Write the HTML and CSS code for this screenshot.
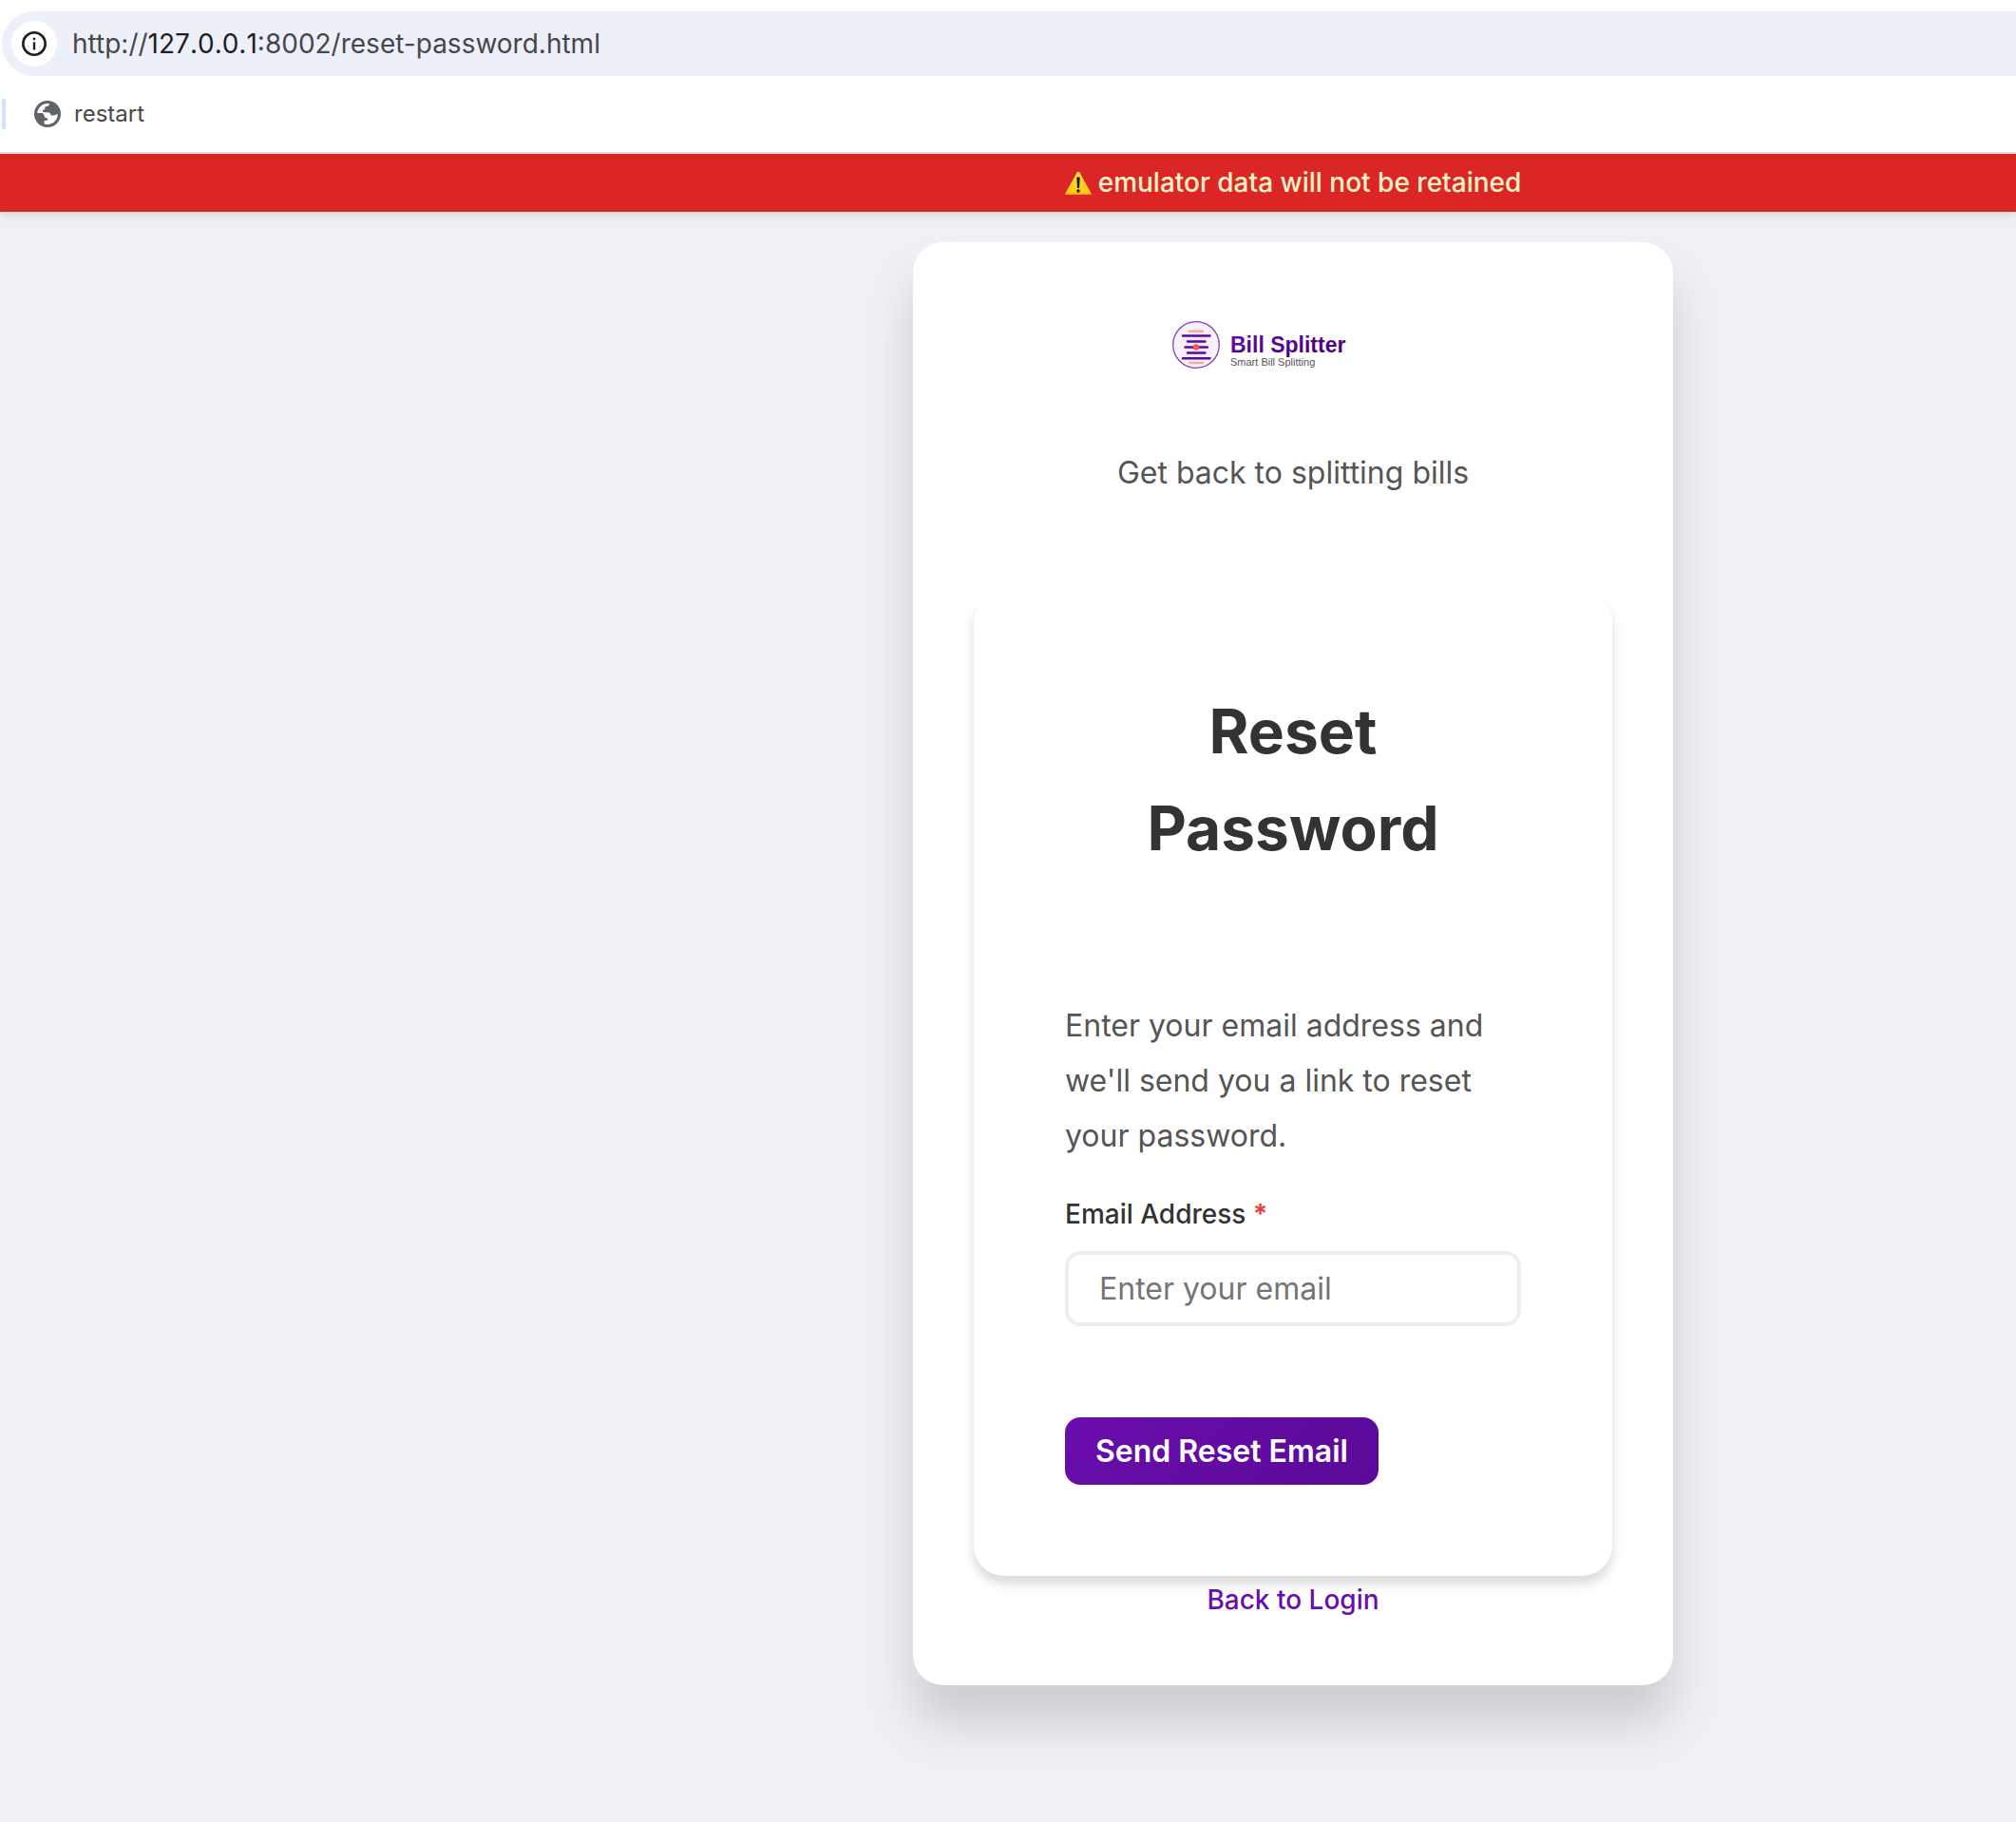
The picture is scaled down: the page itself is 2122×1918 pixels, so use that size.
FILE: index.html
```html
<!DOCTYPE html>
<html lang="en">
<head>
<meta charset="utf-8">
<title>Reset Password - Bill Splitter</title>
<link rel="stylesheet" href="styles.css">
</head>
<body>
<header class="browser">
  <div class="address-bar">
    <button class="site-info" type="button" aria-label="View site information">
      <svg width="28" height="28" viewBox="0 0 28 28" fill="none" aria-hidden="true">
        <circle cx="14" cy="14" r="11.7" stroke="#1f1f1f" stroke-width="2.6"/>
        <rect x="12.8" y="12.4" width="2.4" height="8" fill="#1f1f1f"/>
        <rect x="12.8" y="7.8" width="2.4" height="2.4" fill="#1f1f1f"/>
      </svg>
    </button>
    <div class="url">http://<span class="url-host">127.0.0.1</span>:8002/reset-password.html</div>
  </div>
  <nav class="bookmarks">
    <span class="bookmark-divider"></span>
    <a class="bookmark" href="#">
      <svg width="28" height="28" viewBox="0 0 28 28" aria-hidden="true">
        <circle cx="14" cy="14" r="14" fill="#5f6368"/>
        <path d="M3.200 13C3.700 7.700 8.200 3.200 14 3.100L16 3.300C15.800 5 14.800 6 13 6C11.600 6 11.200 6.800 11.200 8C11.200 9.400 10.400 9.800 9 10C8.800 11.200 9.200 12.200 10.200 12.200H14.500C16.600 12.200 17.400 13.600 17.400 15.400H20C22 15.400 22.600 13.800 24.800 14.200C24.800 20.200 20 24.900 14 24.900C12.800 24.900 11.700 24.800 10.600 24.400V21H12.500C14 21 14.400 19.800 14 18.300C11.600 18.300 10.600 17 10.200 14.400L8.600 13.100Z" fill="#fff"/>
      </svg>
      <span>restart</span>
    </a>
  </nav>
</header>

<div class="banner" role="alert">
  <svg width="28" height="26" viewBox="0 0 28 26" aria-hidden="true">
    <defs>
      <linearGradient id="warn" x1="0" y1="0" x2="0" y2="1">
        <stop offset="0" stop-color="#ffe04a"/><stop offset="1" stop-color="#fdc60a"/>
      </linearGradient>
    </defs>
    <path d="M12.800 1.300Q14 0 15.200 1.300L27.600 23.500Q28 25 26.600 25H1.400Q0 25 .4 23.500Z" fill="url(#warn)"/>
    <path d="M.4 23.500Q0 25 1.400 25H26.600Q28 25 27.600 23.500Z" fill="#eda51c"/>
    <path d="M12.300 6.500H15.700L15 18H13Z" fill="#1c1a0b"/>
    <circle cx="14" cy="21" r="1.700" fill="#1c1a0b"/>
  </svg>
  <span>emulator data will not be retained</span>
</div>

<main class="page">
  <section class="card">
    <svg class="logo" width="272" height="88" viewBox="0 0 272 88" role="img" aria-label="Bill Splitter">
      <defs>
        <linearGradient id="brand" x1="0" y1="0" x2="1" y2="1">
          <stop offset="0" stop-color="#6a0dad"/><stop offset="1" stop-color="#3d0066"/>
        </linearGradient>
        <radialGradient id="disc">
          <stop offset="0" stop-color="#efe6f8"/><stop offset="1" stop-color="#f8f4fd"/>
        </radialGradient>
      </defs>
      <circle cx="34" cy="44" r="24.300" fill="url(#disc)" stroke="#8540bd" stroke-width="1.300"/>
      <g stroke-linecap="round" stroke-width="2.400" fill="none">
        <path d="M27 29.700H41M27 63H41" stroke="#f9a8a4"/>
        <path d="M20 34.500H48.500M25 40.500H43.500M22.500 46.500H46M25 52.500H43.500M20 58.300H48.500" stroke="#5a0a98"/>
      </g>
      <circle cx="34" cy="46.500" r="3.200" fill="#f45b55"/>
      <text class="logo-name" x="70" y="52" fill="url(#brand)">Bill Splitter</text>
      <text class="logo-tag" x="70" y="66">Smart Bill Splitting</text>
    </svg>
    <p class="tagline">Get back to splitting bills</p>

    <form class="panel">
      <h1 class="title">Reset Password</h1>
      <p class="intro">Enter your email address and we'll send you a link to reset your password.</p>
      <label class="label" for="email">Email Address <span class="required">*</span></label>
      <input class="input" id="email" type="email" placeholder="Enter your email">
      <button class="submit" type="button">Send Reset Email</button>
    </form>
    <a class="back" href="#">Back to Login</a>
  </section>
</main>
</body>
</html>
```
FILE: styles.css
```css
* {
  box-sizing: border-box;
}

body {
  margin: 0;
  min-height: 100vh;
  background: #f0f1f5;
  color: #333;
  font-family: Inter, "Liberation Sans", sans-serif;
  font-size: 32px;
}

h1,
p {
  margin: 0;
}

a {
  text-decoration: none;
}

/* Browser toolbar */
.browser {
  padding: 12px 0 24px 2px;
  background: #fff;
  border-bottom: 2px solid #dfe1e3;
}

.address-bar {
  display: flex;
  align-items: center;
  gap: 16px;
  height: 68px;
  padding-left: 10px;
  border-radius: 34px 0 0 34px;
  background: #ecf0f9;
}

.site-info {
  display: flex;
  align-items: center;
  justify-content: center;
  width: 48px;
  height: 48px;
  padding: 0;
  border: 0;
  border-radius: 50%;
  background: #fff;
}

.url {
  color: #474747;
  font-size: 28px;
}

.url-host {
  color: #1f1f1f;
  font-kerning: none;
}

.bookmarks {
  display: flex;
  align-items: center;
  gap: 30px;
  margin-top: 24px;
}

.bookmark-divider {
  width: 4px;
  height: 32px;
  border-radius: 2px;
  background: #d3e3fd;
}

.bookmark {
  display: flex;
  align-items: center;
  gap: 14px;
  color: #474747;
  font-size: 24px;
  line-height: 32px;
}

.banner,
.page {
  padding-left: 600px;
}

.banner {
  position: relative;
  display: flex;
  align-items: center;
  justify-content: center;
  gap: 7px;
  padding-top: 8px;
  padding-bottom: 8px;
  background: #dc2626;
  box-shadow: 0 4px 8px rgba(0, 0, 0, 0.1);
  color: #fef3c7;
  font-size: 28px;
  font-weight: 500;
  line-height: 45px;
}

.page {
  display: flex;
  justify-content: center;
  padding-top: 32px;
  padding-bottom: 64px;
}

.card {
  display: flex;
  flex-direction: column;
  align-items: center;
  width: 800px;
  padding: 64px;
  border-radius: 32px;
  background: #fff;
  box-shadow: 0 40px 50px rgba(0, 0, 0, 0.15);
}

.logo-name {
  font: bold 23px "Liberation Sans", sans-serif;
}

.logo-tag {
  fill: #555;
  font: 11px "Liberation Sans", sans-serif;
}

.tagline {
  margin: 64px 0 98px;
  color: #555;
  line-height: 54px;
}

.panel {
  display: flex;
  flex-direction: column;
  align-items: flex-start;
  width: 100%;
  padding: 96px;
  border-radius: 32px;
  background: #fff;
  box-shadow: 0 8px 12px rgba(0, 0, 0, 0.15);
}

.title {
  width: 100%;
  margin-bottom: 128px;
  padding: 0 64px;
  font-size: 64px;
  font-weight: 700;
  line-height: 102px;
  text-align: center;
}

.intro {
  margin-bottom: 30px;
  color: #555;
  line-height: 58px;
}

.label {
  margin-bottom: 16px;
  font-size: 28px;
  font-weight: 500;
  line-height: 46px;
}

.required {
  color: #e53e3e;
  font-weight: 700;
}

.input {
  width: 100%;
  margin-bottom: 96px;
  padding: 16px 32px;
  border: 4px solid #eee;
  border-radius: 16px;
  background: #fff;
  color: #333;
  font: 32px/39px Inter, "Liberation Sans", sans-serif;
}

.input::placeholder {
  color: #757575;
}

.submit {
  padding: 16px 32px;
  border: 0;
  border-radius: 16px;
  background: linear-gradient(135deg, #6a0dad, #5a0a98);
  color: #fff;
  font: 600 32px/39px Inter, "Liberation Sans", sans-serif;
}

.back {
  color: #6a0dad;
  font-size: 28px;
  font-weight: 500;
  line-height: 51px;
}
```
